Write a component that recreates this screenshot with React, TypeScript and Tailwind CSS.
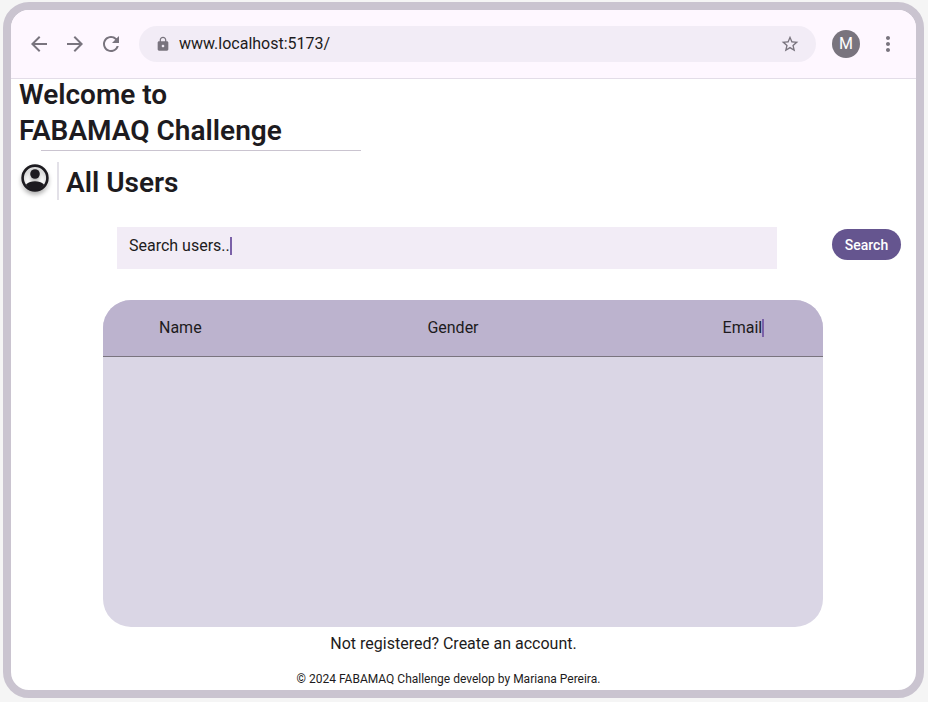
import { useState } from "react";
import {
  MdArrowBack,
  MdArrowForward,
  MdLock,
  MdMoreVert,
  MdRefresh,
  MdStarBorder,
} from "react-icons/md";

function Caret() {
  return <span aria-hidden="true" className="block h-[18px] w-0.5 shrink-0 bg-[#7b61a8]" />;
}

function AccountIcon() {
  return (
    <svg viewBox="0 0 28 28" className="size-7 drop-shadow-[0_3px_2px_rgba(0,0,0,0.3)]" aria-hidden="true">
      <circle cx="14" cy="14" r="12.4" fill="none" stroke="#1d1b20" strokeWidth="2.6" />
      <circle cx="14" cy="10" r="4.8" fill="#1d1b20" />
      <path d="M5 20.5C7.4 18.3 10.5 17.2 14 17.2S20.6 18.3 23 20.5C21 24 17.8 26 14 26S7 24 5 20.5Z" fill="#1d1b20" />
    </svg>
  );
}

function BrowserBar() {
  const [url, setUrl] = useState("www.localhost:5173/");
  return (
    <header className="flex h-[69px] shrink-0 items-center gap-4 border-b border-[#e3dde8] bg-[#fef7ff] px-4 text-[#79747e]">
      <nav aria-label="Browser" className="flex gap-3">
        <button type="button" aria-label="Back">
          <MdArrowBack className="size-6" />
        </button>
        <button type="button" aria-label="Forward">
          <MdArrowForward className="size-6" />
        </button>
        <button type="button" aria-label="Reload">
          <MdRefresh className="size-6" />
        </button>
      </nav>
      <div className="flex h-9 min-w-0 flex-1 items-center gap-2 rounded-full bg-[#f2ecf6] px-4">
        <MdLock className="size-4 shrink-0" />
        <input
          aria-label="Address"
          value={url}
          onChange={(e) => setUrl(e.target.value)}
          className="min-w-0 flex-1 bg-transparent text-base text-[#1d1b20] outline-none"
        />
        <button type="button" aria-label="Bookmark">
          <MdStarBorder className="size-5" />
        </button>
      </div>
      <button type="button" aria-label="Profile" className="size-7 rounded-full bg-[#79747e] text-base text-white">
        M
      </button>
      <button type="button" aria-label="More">
        <MdMoreVert className="size-6" />
      </button>
    </header>
  );
}

function SearchForm() {
  const [query, setQuery] = useState("Search users..");
  return (
    <form onSubmit={(e) => e.preventDefault()} className="mt-[27px] flex items-start pr-[15px] pl-[106px]">
      <label className="flex h-[42px] min-w-0 flex-1 items-start bg-[#f2ecf6] px-3 pt-[7px]">
        <input
          aria-label="Search users"
          value={query}
          onChange={(e) => setQuery(e.target.value)}
          className="field-sizing-content h-6 max-w-full bg-transparent text-base outline-none"
        />
        <span className="pt-[3px]">
          <Caret />
        </span>
      </label>
      <button type="submit" className="mt-0.5 ml-[55px] h-[31px] w-[69px] rounded-full bg-[#65558f] text-sm font-medium text-white">
        Search
      </button>
    </form>
  );
}

function UsersTable() {
  return (
    <div className="mt-[31px] mr-[93px] ml-[92px] h-[327px] overflow-hidden rounded-[28px] bg-[#dad6e5]">
      <table className="w-full table-fixed border-collapse text-left text-base">
        <thead>
          <tr className="h-14 border-b border-[#79747e] bg-[#bcb3ce]">
            <th scope="col" className="w-[37%] pl-14 font-normal">Name</th>
            <th scope="col" className="w-[41%] pl-[58px] font-normal">Gender</th>
            <th scope="col" className="pl-[58px] font-normal">
              <span className="flex items-center">
                Email
                <Caret />
              </span>
            </th>
          </tr>
        </thead>
        <tbody />
      </table>
    </div>
  );
}

export default function App() {
  return (
    <div className="min-h-screen bg-[#f5f5f5] pt-0.5 pr-1 pb-1 pl-[3px] font-[Roboto,sans-serif] text-[#1d1b20]">
      <div className="flex min-h-[696px] flex-col overflow-hidden rounded-[26px] border-8 border-[#cac4d0] bg-white">
        <BrowserBar />
        <main>
          <h1 className="-mt-0.5 pl-2 text-[28px] leading-9 font-semibold">
            Welcome to
            <br />
            FABAMAQ Challenge
          </h1>
          <hr className="mt-px ml-[30px] w-80 border-[#cac4d0]" />
          <div className="mt-[11px] flex items-start pl-2.5">
            <div className="pt-0.5">
              <AccountIcon />
            </div>
            <div className="ml-2 h-[38px] border-l-2 border-[#e3e1e8] pt-[3px] pl-[7px]">
              <h2 className="text-[28px] leading-9 font-semibold">All Users</h2>
            </div>
          </div>
          <SearchForm />
          <UsersTable />
        </main>
        <footer className="flex flex-col items-center pt-[5px] pr-5">
          <a href="#register" className="text-base">Not registered? Create an account.</a>
          <p className="mt-[15px] pr-2.5 text-xs">© 2024 FABAMAQ Challenge develop by Mariana Pereira.</p>
        </footer>
      </div>
    </div>
  );
}
